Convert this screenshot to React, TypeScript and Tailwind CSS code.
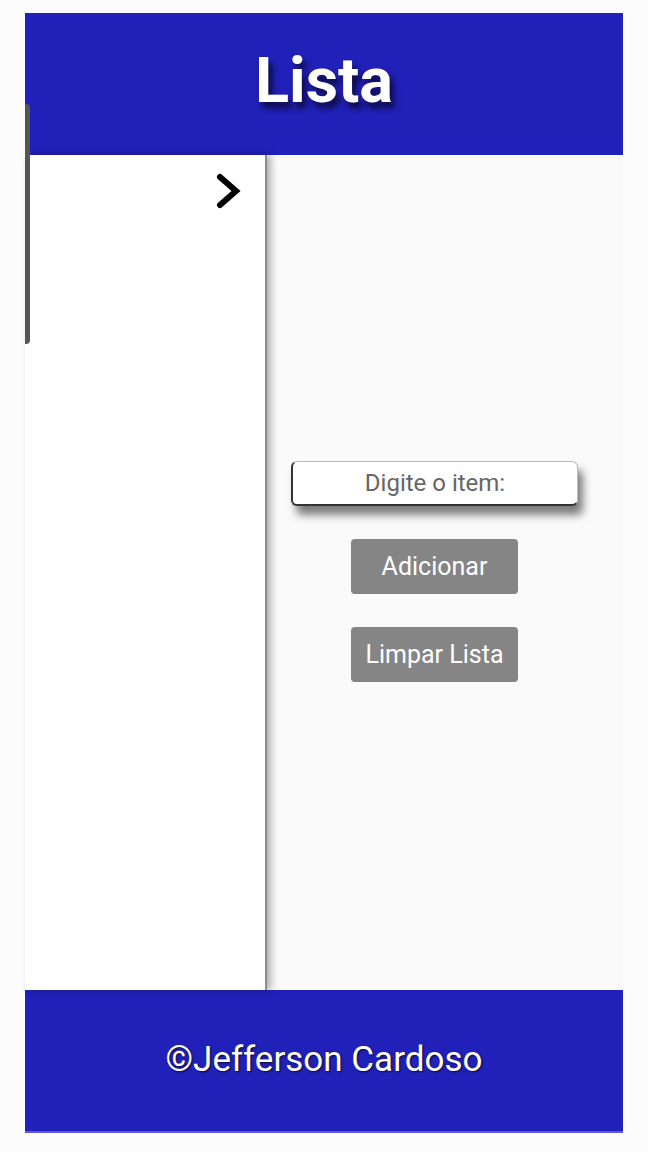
import React from "react";

const Chevron = () => (
  <svg width="30" height="40" viewBox="0 0 30 40" fill="none">
    <path d="M6 5 L22 19 L6 33" stroke="#000" strokeWidth="6" strokeLinejoin="miter" strokeLinecap="round" />
  </svg>
);

const App = () => {
  return (
    <div className="relative min-h-[1152px] bg-[#fcfcfc] pt-[13px] font-['Roboto',sans-serif]">
      <div className="mx-[25px] w-[598px]">
        <header className="h-[142px] bg-[#2120b8] flex items-center justify-center">
          <h1 className="text-white font-bold text-[63px] leading-none mt-[-8px] [text-shadow:4px_6px_6px_rgba(0,0,0,0.65)]">
            Lista
          </h1>
        </header>

        <main className="flex h-[835px]">
          <aside className="relative z-10 w-[242px] bg-white border-r-2 border-[#8c8c8c] shadow-[4px_0_7px_rgba(0,0,0,0.3)] flex justify-end pt-[17px] pr-[21px]">
            <div className="h-[40px]">
              <Chevron />
            </div>
          </aside>
          <section className="flex-1 bg-[#fafafa] flex flex-col items-center justify-center gap-[33px] pr-[21px] pb-[2px]">
            <input
              placeholder="Digite o item:"
              className="w-[287px] h-[45px] bg-white rounded-md border border-[#bbb] border-l-2 border-b-2 border-l-[#333] border-b-[#333] shadow-[5px_9px_8px_rgba(0,0,0,0.5)] text-center text-[24px] text-[#555] placeholder:text-[#666] outline-none"
            />
            <button className="w-[167px] h-[55px] bg-[#858585] text-white text-[25px] rounded-[4px]">
              Adicionar
            </button>
            <button className="w-[167px] h-[55px] bg-[#858585] text-white text-[25px] rounded-[4px]">
              Limpar Lista
            </button>
          </section>
        </main>

        <footer className="h-[143px] bg-[#2120b8] border-b-2 border-[#5a5ad8] flex items-center justify-center">
          <p className="text-white text-[35px] [text-shadow:1px_1px_2px_rgba(0,0,0,0.7)]">
            ©Jefferson Cardoso
          </p>
        </footer>
      </div>

      <div className="absolute z-20 left-[25px] top-[104px] w-[5px] h-[240px] rounded-r-sm bg-[#555]" />
    </div>
  );
};

export default App;
